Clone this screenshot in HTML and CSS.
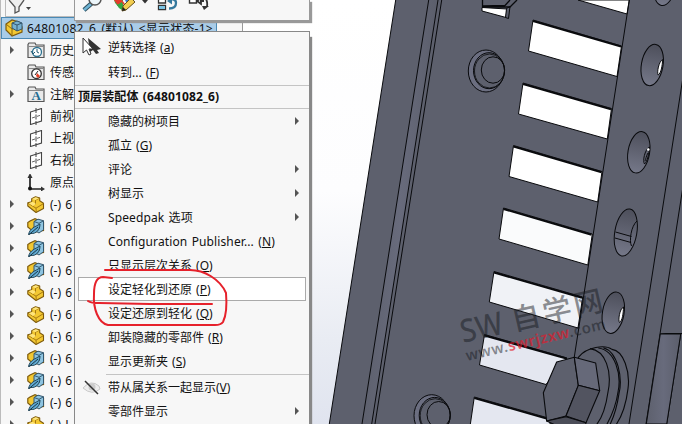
FILE: index.html
```
<!DOCTYPE html>
<html lang="zh-CN">
<head>
<meta charset="utf-8">
<title>装配体</title>
<link rel="stylesheet" href="styles.css">
</head>
<body>
<svg class="defs" width="0" height="0" aria-hidden="true">
  <defs>
    <symbol id="folder" viewBox="0 0 18 17"><path d="M1 15.5V2.5L2 1h6l1 2h8v12.500z" fill="#e9e9e9" stroke="#555" stroke-width="1.2"/><path d="M1.500 4.500H17" stroke="#888"/></symbol>
    <symbol id="plane" viewBox="0 0 18 17"><path d="M3.500 4 14.500.500v12.500l-11 3.500z" fill="#fff" stroke="#444" stroke-width="1.1"/><path d="M9 0v17" stroke="#444" stroke-dasharray="5 1.500" fill="none"/><path d="M5 10l3-1m2-.600 3-1" stroke="#666" fill="none"/></symbol>
    <symbol id="origin" viewBox="0 0 18 17"><path d="M3 2v13h13" fill="none" stroke="#222" stroke-width="1.700"/><path d="M3-1 .500 4h5zM18 15l-4-2.500v5z" fill="#333"/><circle cx="3" cy="14.500" r="2" fill="#111"/></symbol>
    <symbol id="part" viewBox="0 0 18 17"><path d="M.8 6.800V10L9 16.500l7.500-4V7.200l-3.800-2.400V2L8.500.700 4.700 2.700v3z" fill="#f3c832" stroke="#7d5a0c" stroke-width="1.100" stroke-linejoin="round"/><path d="M1 7.200l8 5 7.300-4.500M8.500 4.200 12.700 2M8.500 4.200v4M9 12.200l.3 4" fill="none" stroke="#a67a13"/><path d="M5 3l3.500-1.800L12 2.200 8.500 3.900zM1.800 7.300l3.700-1.500 3.300 1.900L6 9.900z" fill="#ffe57c"/></symbol>
    <symbol id="lite" viewBox="0 0 18 17"><path d="M.8 4.500V9l6 5 9.700-1.500V4.500L8 .700 3 3z" fill="#f3c832" stroke="#7d5a0c" stroke-width="1.200"/><path d="M7 3.500 11 1.200l5.500 1.500v9L12 15 7 12z" fill="#8ec4e0" stroke="#34566c"/><path d="M7 3.500l5 1.800 4.500-2.500M12 5.500V11" fill="none" stroke="#345c74"/><path d="M1.500 16.500C3 10 8 9 13 6 13 12 9 16 4 15.500z" fill="#61a9d0" stroke="#234759"/><path d="M1.500 17 11 9" stroke="#173648"/></symbol>
    <g id="peg"><ellipse cx="-7" cy="1" rx="17.700" ry="21" fill="#6b6e80"/><ellipse cx="-4" cy=".700" rx="15.500" ry="18" fill="#5d606d"/><ellipse cx="-3.500" cy="1" rx="15" ry="17" stroke-width=".8"/><ellipse cx="0" cy="0" rx="11.700" ry="13.200"/></g>
    <linearGradient id="sky" x2="0" y2="1"><stop offset="0" stop-color="#fff"/><stop offset=".45" stop-color="#fdfdfe"/><stop offset=".8" stop-color="#e9ecf3"/><stop offset="1" stop-color="#e0e4ef"/></linearGradient>
    <linearGradient id="bore" x2="0" y2="1"><stop offset="0" stop-color="#4d4f5b"/><stop offset="1" stop-color="#757889"/></linearGradient>
    <linearGradient id="fold"><stop offset="0" stop-color="#5d606d"/><stop offset=".5" stop-color="#686b7c"/><stop offset="1" stop-color="#5b5e6b"/></linearGradient>
  </defs>
</svg>
<main class="app">
  <aside class="tree">
    <div class="filter"><svg width="30" height="17"><path d="M3 0l6 7v6l4-2V7l5-7" fill="#eee" stroke="#555" stroke-width="1.300"/><path d="M20 7h5l-2.500 3z" fill="#444"/></svg></div>
    <div class="root"><svg class="rooticon" viewBox="0 0 18 18"><path d="M1 5v6l6 6 10-4V8l-3-5-7-2z" fill="#f3c832" stroke="#7d5a0c" stroke-width="1.200"/><path d="M1 5l6 5v7M7 10l10-2" stroke="#8d680c" fill="none"/><path d="M7 4l5-2 5 2v6l-5 2-5-3z" fill="#76b1d1" stroke="#34566c"/><path d="M7 4l5 2 5-2M12 6v6" stroke="#34566c" fill="none"/></svg><span>64801082_6 (默认) &lt;显示状态-1&gt;</span></div>
    <ul class="nodes">
      <li><i class="arrow"></i><svg class="icon"><use href="#folder"/><circle cx="10" cy="10" r="4.500" fill="#fff" stroke="#2c718f" stroke-width="1.300"/><path d="M10 7v3l2 1M4 9l2 3 2-2" fill="none" stroke="#225a73"/></svg><span>历史</span></li>
      <li><i class="arrow off"></i><svg class="icon"><use href="#folder"/><circle cx="9.500" cy="9.700" r="4.800" fill="#fff" stroke="#333" stroke-width="1.300"/><path d="M10 9l3 3-2 2-2-2z" fill="#e54027"/><path d="M8 11l3-4" stroke="#222"/></svg><span>传感</span></li>
      <li><i class="arrow"></i><svg class="icon"><use href="#folder"/><text x="4.500" y="14" class="note">A</text></svg><span>注解</span></li>
      <li><i class="arrow off"></i><svg class="icon"><use href="#plane"/></svg><span>前视</span></li>
      <li><i class="arrow off"></i><svg class="icon"><use href="#plane"/></svg><span>上视</span></li>
      <li><i class="arrow off"></i><svg class="icon"><use href="#plane"/></svg><span>右视</span></li>
      <li><i class="arrow off"></i><svg class="icon"><use href="#origin"/></svg><span>原点</span></li>
      <li><i class="arrow"></i><svg class="icon"><use href="#part"/></svg><span>(-) 6</span></li>
      <li><i class="arrow"></i><svg class="icon"><use href="#lite"/></svg><span>(-) 6</span></li>
      <li><i class="arrow"></i><svg class="icon"><use href="#lite"/></svg><span>(-) 6</span></li>
      <li><i class="arrow"></i><svg class="icon"><use href="#lite"/></svg><span>(-) 6</span></li>
      <li><i class="arrow"></i><svg class="icon"><use href="#part"/></svg><span>(-) 6</span></li>
      <li><i class="arrow"></i><svg class="icon"><use href="#part"/></svg><span>(-) 6</span></li>
      <li><i class="arrow"></i><svg class="icon"><use href="#part"/></svg><span>(-) 6</span></li>
      <li><i class="arrow"></i><svg class="icon"><use href="#lite"/></svg><span>(-) 6</span></li>
      <li><i class="arrow"></i><svg class="icon"><use href="#lite"/></svg><span>(-) 6</span></li>
      <li><i class="arrow"></i><svg class="icon"><use href="#lite"/></svg><span>(-) 6</span></li>
      <li><i class="arrow"></i><svg class="icon"><use href="#part"/></svg><span>(-) L</span></li>
    </ul>
  </aside>
  <svg class="viewport" viewBox="243 0 439 424">
    <rect x="243" width="439" height="424" fill="url(#sky)"/>
    <path d="M395.700 0H682V424H329.300z" fill="#5d606d"/>
    <path d="M428.700 0h9.300L371.700 424H362z" fill="url(#fold)"/>
    <g class="edge">
      <path d="M395.700 0 329.300 424M428.700 0 362 424M438 0 371.700 424M441.700 0 375 424"/>
      <g class="slots">
        <path d="M578 0 627 14 629.300 0z"/>
        <path d="M533 20 621.500 46 617 76.500 528.500 51z"/>
        <path d="M523 83 611.500 108.500 607.300 139 518.500 114z"/>
        <path d="M513.500 145.500 602 171.500 597.700 202 509 176.500z"/>
        <path d="M503.500 208 592.300 234 587.800 265 499 239z"/>
        <path d="M494 271.500 582.700 297 578 328 489.300 302z"/>
        <path d="M484.500 334.500 567 358 546 384.500 479.500 365z"/>
        <path d="M474.300 397 550 418.500V430H469.500z"/>
      </g>
      <path class="lip" d="M533 21 621 46.500M523 84l88 25.300M513.500 146.500l88 25.800M503.500 209l88 25.800M494 272.500l88 25.300M484.500 335.500l82 23M474.300 398l74 21"/>
      <path d="M629.300 0 574.300 357M695 0 629 424M712 0 646 424M660 334l6-.500h16M680.700 334 666.700 424"/>
      <path d="M482 7.500 507 9 506 17.500 482 11z" fill="#fff"/>
      <path d="M506.500 8.500 510 6.500 508.500 18.500 505.500 17.500z" fill="#5d606d"/>
      <path d="M482.500 0v7L510 7 517 0M505 5.500 510 0M482.500 5.800 505 5.500" stroke-width="1.300"/>
      <use href="#peg" x="493" y="70"/>
      <use href="#peg" x="438.700" y="414.700"/>
      <g fill="url(#bore)">
        <ellipse cx="665" cy="-15" rx="10.800" ry="20.700" transform="rotate(10 665 -15)"/>
        <ellipse cx="652.200" cy="65" rx="10.800" ry="20.900" transform="rotate(10 652.200 65)"/>
        <ellipse cx="638.800" cy="152.300" rx="10.800" ry="20.900" transform="rotate(10 638.800 152.300)"/>
        <ellipse cx="625.800" cy="232.500" rx="11" ry="23.800" transform="rotate(10 625.800 232.500)"/>
        <ellipse cx="613.300" cy="312.700" rx="10.800" ry="20.900" transform="rotate(10 613.300 312.700)"/>
      </g>
      <path d="M662.700 59.500c-4 2-6 13-4.500 15.500 3-2 4-9 4.500-15.500zM623.500 307c-4 2-5.500 13-4 15.500 3-2 3.800-9 4-15.500z" fill="#fff"/>
      <path d="M649.500 147c-5 3-7 14-5 17 3-3 4.500-10 5-17M648 153c-2 3-2 6-3 8M637 221c-6 5-8 20-5.500 25M615.500 232l16 4.500M615 238l16 4.500"/>
      <circle cx="648.300" cy="149.500" r="1.200" fill="#fff" stroke="none"/>
      <path d="M660.300 334h20.400L666.700 424H646.300z" fill="url(#fold)"/>
      <g class="bolt" transform="translate(440 212) scale(.33333)">
        <path d="M415 436C440 403 496 398 516 412C551 416 571 480 564 530C558 580 547 612 527 640H430z" fill="#5d606d"/>
        <path d="M450 410C497 416 517 478 504 540C497 590 485 620 468 640M475 408C526 415 545 488 534 540C527 590 510 620 499 640M490 407C535 420 548 500 537 545C530 592 519 620 509 640" fill="none"/>
        <path d="M350 450 403 436 415 520 378 612 320 627 310 542z" fill="#5d606d"/>
        <path d="M403 436 467 453 479 536 415 520z" fill="#666979"/>
        <path d="M415 520 479 536 438 632 378 612z" fill="#525460"/>
        <path d="M320 627 378 614 438 632 435 642H352z" fill="#4b4d58"/>
      </g>
    </g>
    <g class="watermark">
      <text transform="translate(463 343) rotate(-13)" class="wm-latin" textLength="43" lengthAdjust="spacingAndGlyphs">SW</text>
      <text transform="translate(514 331) rotate(-13)" class="wm-name" textLength="93">自学网</text>
      <text transform="translate(467 361) rotate(-13)" class="wm-url" textLength="143">www.<tspan class="wm-red">swrjzxw</tspan>.com</text>
    </g>
  </svg>

  <div class="popbar">
    <svg width="234" height="20">
      <path d="M9 10l8-7" stroke="#30505f" stroke-width="4.500"/><path d="M9 10l7-6" stroke="#6eb4d5" stroke-width="2.500"/><circle cx="20" cy="-1" r="6" fill="#edf6fa" stroke="#555" stroke-width="1.500"/>
      <path d="M39 0a10 10 0 0 0 9 8V0z" fill="#35a744"/><path d="M39 0h8l3 4-5 2q-4-2-6-6z" fill="#e43d2d"/><path d="M42 5l5-3 2 6-2 2q-4-2-5-5z" fill="#35a744"/><path d="M48-4h9q1 5-5 8z" fill="#3978cf"/><path d="M47 11l1-5 8-8 4 4-9 8z" fill="#f2cd50" stroke="#66501b"/><path d="M47 11l1-4 3 3z" fill="#222"/>
      <path d="M67 0h6l-3 3.500z" fill="#333"/>
      <path d="M83.500-2h7v5h-7zM83.500 5.500h7v4h-7z" fill="#fff" stroke="#333" stroke-width="1.300"/><path d="M84 6h6v3h-6z" fill="#7bc3e3"/><path d="M94 8.500q7 0 7-5.500 0-4-5-4" fill="none" stroke="#34789d" stroke-width="2.300"/><path d="M92 1l5-3.500v7z" fill="#34789d"/>
      <path d="M114.500-3h7v6h-7z" fill="#fff" stroke="#333" stroke-width="1.400"/><path d="M122 1l4-3v6zM125 1h4M129-2q4 1 3 9" fill="none" stroke="#333" stroke-width="1.800"/><path d="M127 6h7l-5 4z" fill="#333"/>
    </svg>
  </div>

  <nav class="menu">
    <div class="item"><svg class="mark" viewBox="0 0 20 20"><path d="M6 1l13 11-4 1 2 3-3 1-3-4-3 2z" fill="#333"/><path d="M1 1v15l3.500-3 2.500 5 2-1-2-5h4z" fill="#fff" stroke="#333"/></svg><span>逆转选择 (<u>a</u>)</span></div>
    <div class="item second"><span>转到... (<u>F</u>)</span></div>
    <div class="heading">顶层装配体 (64801082_6)</div>
    <div class="item"><span>隐藏的树项目</span><i class="arrow"></i></div>
    <div class="item"><span>孤立 (<u>G</u>)</span></div>
    <div class="item"><span>评论</span><i class="arrow"></i></div>
    <div class="item"><span>树显示</span><i class="arrow"></i></div>
    <div class="item"><span class="latin">Speedpak 选项</span><i class="arrow"></i></div>
    <div class="item"><span class="latin">Configuration Publisher... (<u>N</u>)</span></div>
    <div class="item"><span>只显示层次关系 (<u>O</u>)</span></div>
    <div class="item hover"><span>设定轻化到还原 (<u>P</u>)</span></div>
    <div class="item"><span>设定还原到轻化 (<u>Q</u>)</span></div>
    <div class="item"><span>卸装隐藏的零部件 (<u>R</u>)</span></div>
    <div class="item"><span>显示更新夹 (<u>S</u>)</span></div>
    <div class="rule"></div>
    <div class="item"><svg class="mark" viewBox="0 0 20 20"><path d="M1 11q8-9 16-2l1 3q-8 7-17-1z" fill="#eee" stroke="#c9c9c9"/><circle cx="10" cy="10" r="3.500" fill="#ccc"/><path d="M3 4l13 13" stroke="#333" stroke-width="1.500"/></svg><span>带从属关系一起显示(<u>V</u>)</span></div>
    <div class="item"><span>零部件显示</span><i class="arrow"></i></div>
  </nav>

  <svg class="ink" viewBox="0 0 682 424">
    <path d="M105 270H190C204 270 220 279 226 293C227 305 226 316 223 322Q221 325 215 325H108C98 323 93 308 94 294C94 283 97 277 103 277L112 278M88 301Q91 303 99 303L150 304 212 304"/>
  </svg>
</main>
</body>
</html>
```
FILE: styles.css
```
* { box-sizing: border-box; }
body { margin: 0; background: #fff; }
.defs { position: absolute; }
.app {
  position: relative;
  display: grid;
  grid-template-columns: 243px 439px;
  width: 682px;
  height: 424px;
  overflow: hidden;
  font: 12px/22px "Noto Sans", "Noto Sans CJK SC", sans-serif;
  color: #111;
}
.tree {
  height: 424px;
  overflow: hidden;
  background: #f7f7f7;
  border-left: 1px solid #bbb;
  border-right: 1px solid #999;
}
.filter {
  height: 17px;
  margin-left: 4px;
  border: solid #bbb;
  border-width: 0 0 1px 1px;
}
.filter svg, .popbar svg, .viewport { display: block; }
.root {
  display: flex;
  align-items: center;
  width: 216px;
  height: 22px;
  padding-left: 3px;
  gap: 4px;
  background: #a9cce8;
  border: 1px solid #4a89b4;
  white-space: nowrap;
}
.root span { letter-spacing: .2px; word-spacing: 2px; padding-top: 1px; }
.rooticon { width: 18px; height: 18px; }
.nodes { margin: 0; padding: 0; list-style: none; }
.nodes li {
  display: flex;
  align-items: center;
  height: 22px;
  padding-left: 9px;
  white-space: nowrap;
}
.nodes span { padding-top: 1px; word-spacing: 1px; }
.arrow {
  width: 0;
  height: 0;
  border: solid transparent;
  border-width: 4px 0 4px 4px;
  border-left-color: #555;
}
.off { visibility: hidden; }
.icon { width: 18px; height: 17px; margin: 0 5px 0 13px; overflow: visible; }
.note { font: bold 13px "Liberation Serif", serif; fill: #236c91; }
.viewport { width: 439px; height: 424px; }
.edge { fill: none; stroke: #090a0d; stroke-width: 1; stroke-linejoin: round; }
.slots path { fill: #fff; }
.slots path:nth-child(5) { fill: #fafbfc; }
.slots path:nth-child(6) { fill: #f0f2f6; }
.slots path:nth-child(n+7) { fill: #e4e7f0; }
.lip { stroke-width: 2; }
.bolt { stroke-width: 3.3; }
.watermark { fill: #15181d; fill-opacity: .48; }
.wm-latin { font: 500 32px "Noto Sans", sans-serif; }
.wm-name { font: 500 29px "Noto Sans CJK SC", sans-serif; }
.wm-url { font: 600 15px "Noto Sans", sans-serif; }
.wm-red { fill: #e3192b; fill-opacity: .7; }
.popbar {
  position: absolute;
  left: 74px;
  top: 0;
  width: 236px;
  height: 21px;
  background: #f7f7f7;
  border: 1px solid #999;
  border-top: 0;
  box-shadow: 2px 2px 1px #999;
  overflow: hidden;
}
.menu {
  position: absolute;
  left: 74px;
  top: 31px;
  width: 236px;
  height: 400px;
  padding-top: 3px;
  background: #f7f7f7;
  border: 1px solid #888;
  box-shadow: 2px 6px 1px #888;
}
.item {
  position: relative;
  display: flex;
  align-items: center;
  justify-content: space-between;
  height: 24px;
  padding: 0 10px 0 33px;
  white-space: nowrap;
}
.item span { padding-top: 1px; word-spacing: 1px; }
.item .latin { letter-spacing: .12px; }
.item.second { height: 26px; }
.item u { text-underline-offset: 1px; }
.mark { position: absolute; left: 7px; top: 2px; width: 20px; height: 20px; }
.heading {
  height: 24px;
  padding-left: 3px;
  border: solid #c4c4c4;
  border-width: 1px 0;
  font-weight: bold;
  letter-spacing: .12px;
  word-spacing: 1px;
  white-space: nowrap;
}
.hover {
  margin: 0 3px;
  padding-left: 29px;
  background: #fff;
  border: 1px solid #aaa;
}
.rule { height: 1px; margin: 1px 0 0 31px; background: #c4c4c4; }
.ink {
  position: absolute;
  left: 0;
  top: 0;
  width: 682px;
  height: 424px;
  fill: none;
  stroke: #e6212b;
  stroke-width: 2;
  stroke-linecap: round;
  stroke-linejoin: round;
}
```
